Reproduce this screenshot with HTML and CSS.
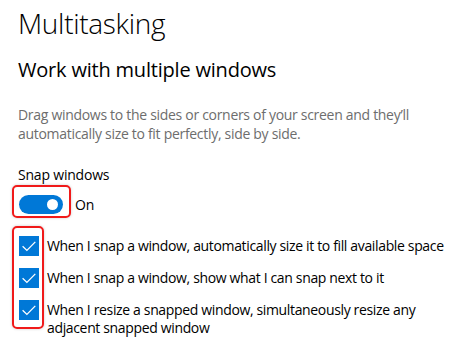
FILE: index.html
```html
<!DOCTYPE html>
<html lang="en">
  <head>
    <meta charset="UTF-8">
    <title>Multitasking</title>
    <link rel="stylesheet" href="styles.css">
  </head>
  <body>
    <div class="page">
      <h1 class="title">Multitasking</h1>
      <h2 class="section">Work with multiple windows</h2>
      <p class="desc">Drag windows to the sides or corners of your screen and they’ll automatically size to fit perfectly, side by side.</p>

      <div class="setting">
        <div class="setting-label">Snap windows</div>
        <div class="toggle-row">
          <span class="toggle on"><span class="knob"></span></span>
          <span class="toggle-text">On</span>
          <!-- annotation frame -->
          <span class="mark mark-toggle"></span>
        </div>
      </div>

      <ul class="checks">
        <li class="check">
          <span class="box">
            <svg width="20" height="20" viewBox="0 0 20 20"><path d="M3.6 10.2 L7.9 14.4 L16.3 5.9" fill="none" stroke="#fff" stroke-width="1.3"/></svg>
          </span>
          <span class="check-text">When I snap a window, automatically size it to fill available space</span>
        </li>
        <li class="check">
          <span class="box">
            <svg width="20" height="20" viewBox="0 0 20 20"><path d="M3.6 10.2 L7.9 14.4 L16.3 5.9" fill="none" stroke="#fff" stroke-width="1.3"/></svg>
          </span>
          <span class="check-text">When I snap a window, show what I can snap next to it</span>
        </li>
        <li class="check">
          <span class="box">
            <svg width="20" height="20" viewBox="0 0 20 20"><path d="M3.6 10.2 L7.9 14.4 L16.3 5.9" fill="none" stroke="#fff" stroke-width="1.3"/></svg>
          </span>
          <span class="check-text">When I resize a snapped window, simultaneously resize any adjacent snapped window</span>
        </li>
        <span class="mark mark-checks"></span>
      </ul>
    </div>
  </body>
</html>
```

FILE: styles.css
```css
html, body { margin: 0; padding: 0; background: #fff; }
body { color: #000; font: 14px/19px "Open Sans", "Liberation Sans", sans-serif; }
.page { padding: 0 6px 0 18px; }

.title { margin: 0; padding-top: 5px; font-size: 28px; line-height: 36px; font-weight: 300; letter-spacing: -0.3px; }
.section { margin: 15px 0 0; font-size: 20px; line-height: 28px; font-weight: 400; letter-spacing: -0.2px; }
.desc { margin: 21px 0 0; color: #6d6d6d; letter-spacing: -0.3px; padding-right: 8px; }

.setting { margin-top: 22px; }
.setting-label { letter-spacing: -0.2px; }
.toggle-row { position: relative; display: flex; align-items: center; gap: 12px; margin-top: 11px; padding-left: 1px; }
.toggle {
  display: inline-block; width: 44px; height: 19px; border-radius: 10px;
  background: #0078d7; position: relative;
}
.toggle .knob {
  position: absolute; right: 5px; top: 4px;
  width: 11px; height: 11px; border-radius: 50%; background: #fff;
}
.toggle-text { letter-spacing: -0.2px; }

.checks { position: relative; list-style: none; margin: 22px 0 0; padding: 0; }
.check { display: flex; align-items: flex-start; gap: 8px; margin-bottom: 12px; padding-left: 1px; }
.box { flex: none; width: 20px; height: 20px; background: #0078d7; display: block; }
.box svg { display: block; }
.check-text { padding-top: 1px; line-height: 18px; letter-spacing: -0.35px; }

.mark {
  position: absolute; border: 2px solid #f01a1a; border-radius: 5px;
  box-shadow: 0 0 3px rgba(0, 0, 0, .2);
}
.mark-toggle { left: -6px; top: -10px; width: 55px; height: 29px; }
.mark-checks { left: -6px; top: -10px; width: 28px; height: 99px; }
```
